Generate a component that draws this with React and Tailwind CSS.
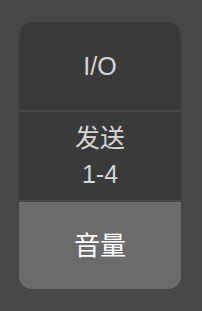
const tabs = [
  { id: "io", lines: ["I/O"] },
  { id: "send", lines: ["发送", "1-4"] },
  { id: "volume", lines: ["音量"], active: true },
];

export default function App() {
  return (
    <div
      className="h-[311px] w-[202px] bg-[#474747] pt-[22px] pl-[19px]"
      style={{ fontFamily: '"Liberation Sans", "Noto Sans CJK SC", sans-serif' }}
    >
      <div className="flex w-[162px] flex-col gap-[2px] overflow-hidden rounded-[13px]">
        {tabs.map((tab) => (
          <div
            key={tab.id}
            className={
              tab.active
                ? "flex h-[87px] flex-col items-center justify-center bg-[#6b6b6b] text-[26px] leading-[34px] text-white"
                : "flex h-[88px] flex-col items-center justify-center bg-[#3a3a3a] text-[25px] leading-[36px] text-[#d6d6d6]"
            }
          >
            {tab.lines.map((line) => (
              <span key={line}>{line}</span>
            ))}
          </div>
        ))}
      </div>
    </div>
  );
}
